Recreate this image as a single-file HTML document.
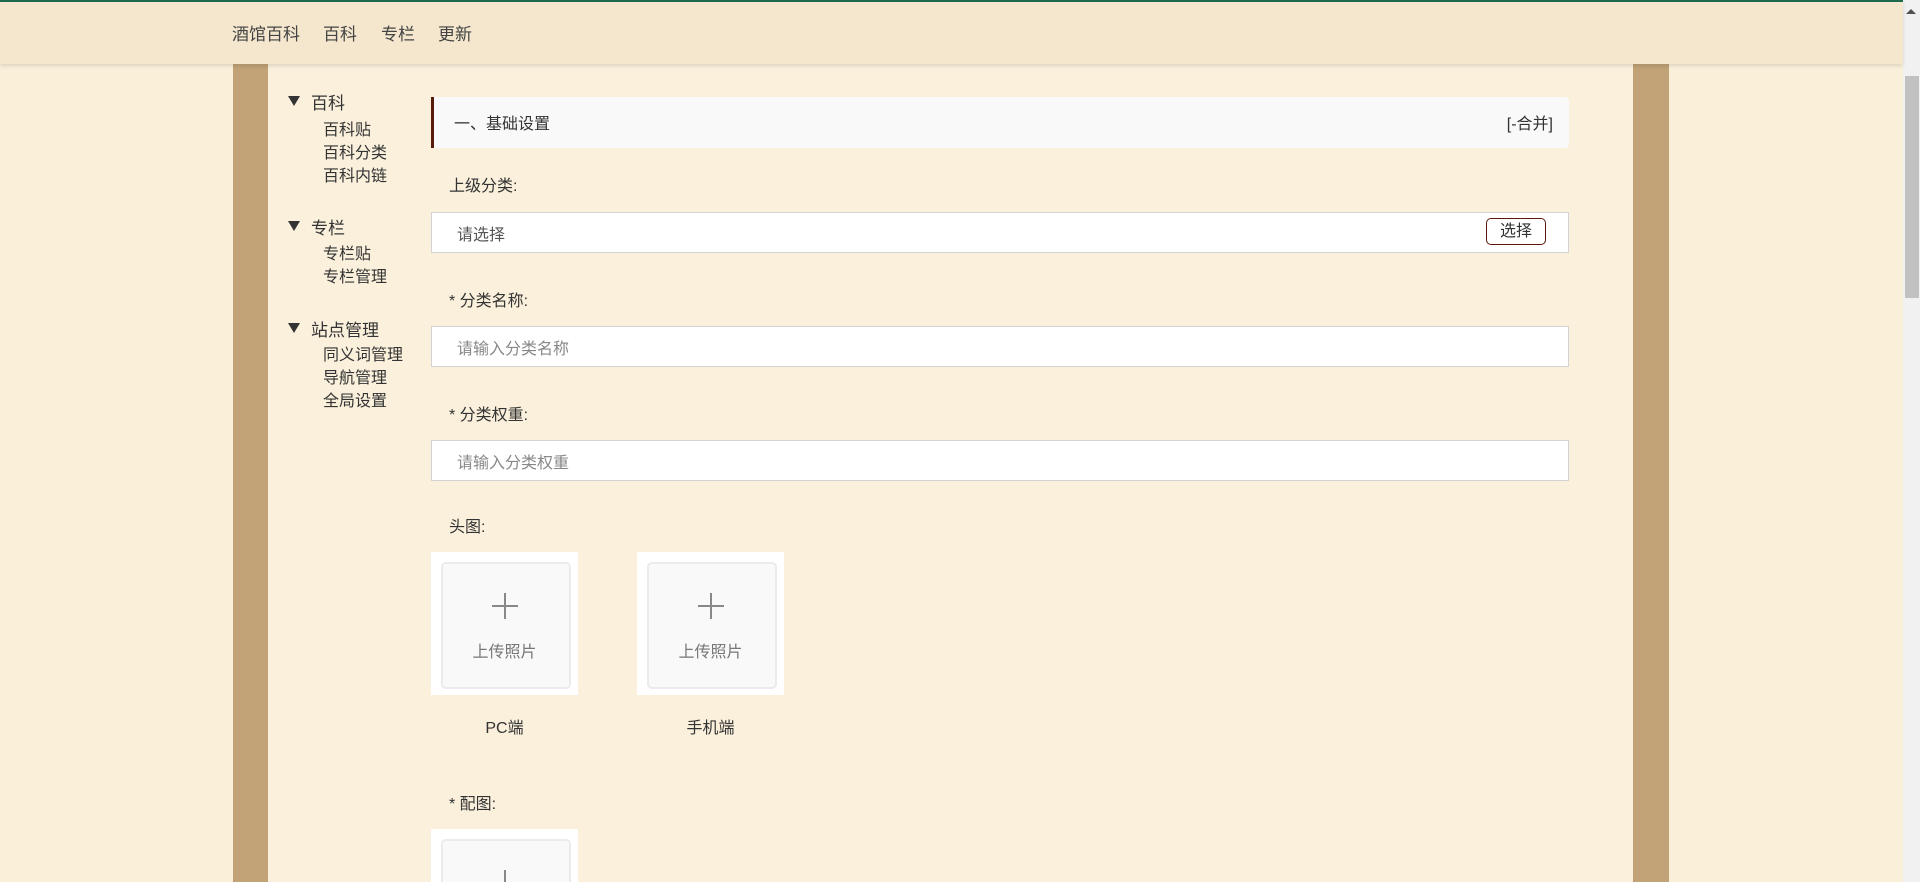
<!DOCTYPE html>
<html style="overflow:hidden;height:882px"><head><meta charset="utf-8"><style>
*{margin:0;padding:0;box-sizing:border-box}
body{width:1920px;height:882px;overflow:hidden;background:#faf0da;font-family:"Liberation Sans","Noto Sans CJK SC",sans-serif;color:#333;position:relative;font-size:16px}
.topline{position:absolute;left:0;top:0;width:1903px;height:2px;background:#1d6b4c;z-index:5}
.header{position:absolute;left:0;top:0;width:1903px;height:64px;background:#f4e7ce;box-shadow:0 2px 4px rgba(0,0,0,.12);z-index:3}
.header span{position:absolute;top:20px;font-size:17px;color:#444}
.bar{position:absolute;top:64px;height:818px;width:36px;background:#c2a377}
.main{position:absolute;left:268px;top:64px;width:1365px;height:818px;background:#faf0dc}
.abs{position:absolute;white-space:nowrap}
.tri{position:absolute;width:0;height:0;border-left:6px solid transparent;border-right:6px solid transparent;border-top:10px solid #333}
.sec{position:absolute;left:431px;top:97px;width:1138px;height:51px;background:#f9f9f9;border-left:3px solid #5a1a0a;border-radius:0 4px 4px 0}
.inp{position:absolute;left:431px;width:1138px;height:41px;background:#fff;border:1px solid #d3d3d3;color:#555}
.inp span{position:absolute;left:25px;top:8px}
.ph{color:#888}
.up{position:absolute;width:147px;height:143px;background:#fff;overflow:hidden}
.up .in{position:absolute;left:10px;top:10px;width:130px;height:127px;background:#f9f9f9;border:2px solid #ebebeb;border-radius:5px}
.up .pl1{position:absolute;left:61px;top:53px;width:26px;height:2px;background:#888}
.up .pl2{position:absolute;left:73px;top:41px;width:2px;height:26px;background:#888}
.up .t{position:absolute;left:0;width:100%;top:86px;text-align:center;color:#777;font-size:16px}
.sb{position:absolute;left:1903px;top:0;width:17px;height:882px;background:#f1f1f1}
.thumb{position:absolute;left:1905px;top:76px;width:14px;height:222px;background:#c1c1c1}
</style></head><body>
<div class="topline"></div>
<div class="header">
<span style="left:232px">酒馆百科</span><span style="left:323px">百科</span><span style="left:381px">专栏</span><span style="left:438px">更新</span>
</div>
<div class="bar" style="left:233px"></div>
<div class="main"></div>
<div class="bar" style="left:1633px"></div>

<div class="tri" style="left:288px;top:96px"></div><div class="abs" style="left:311px;top:89px;font-size:17px">百科</div>
<div class="abs" style="left:323px;top:116px">百科贴</div>
<div class="abs" style="left:323px;top:139px">百科分类</div>
<div class="abs" style="left:323px;top:162px">百科内链</div>
<div class="tri" style="left:288px;top:221px"></div><div class="abs" style="left:311px;top:214px;font-size:17px">专栏</div>
<div class="abs" style="left:323px;top:240px">专栏贴</div>
<div class="abs" style="left:323px;top:263px">专栏管理</div>
<div class="tri" style="left:288px;top:323px"></div><div class="abs" style="left:311px;top:316px;font-size:17px">站点管理</div>
<div class="abs" style="left:323px;top:341px">同义词管理</div>
<div class="abs" style="left:323px;top:364px">导航管理</div>
<div class="abs" style="left:323px;top:387px">全局设置</div>

<div class="sec"><span class="abs" style="left:20px;top:13px">一、基础设置</span><span class="abs" style="right:16px;top:13px">[-合并]</span></div>
<div class="abs" style="left:449px;top:172px">上级分类:</div>
<div class="inp" style="top:212px"><span>请选择</span><div class="abs" style="left:1054px;top:5px;width:60px;height:27px;border:1px solid #5a1a0a;border-radius:5px;text-align:center;line-height:25px;color:#333">选择</div></div>
<div class="abs" style="left:449px;top:287px">* 分类名称:</div>
<div class="inp" style="top:326px"><span class="ph">请输入分类名称</span></div>
<div class="abs" style="left:449px;top:401px">* 分类权重:</div>
<div class="inp" style="top:440px"><span class="ph">请输入分类权重</span></div>
<div class="abs" style="left:449px;top:513px">头图:</div>
<div class="up" style="left:431px;top:552px"><div class="in"></div><div class="pl1"></div><div class="pl2"></div><div class="t">上传照片</div></div>
<div class="up" style="left:637px;top:552px"><div class="in"></div><div class="pl1"></div><div class="pl2"></div><div class="t">上传照片</div></div>
<div class="abs" style="left:431px;width:147px;text-align:center;top:714px">PC端</div>
<div class="abs" style="left:637px;width:147px;text-align:center;top:714px">手机端</div>
<div class="abs" style="left:449px;top:790px">* 配图:</div>
<div class="up" style="left:431px;top:829px;height:53px"><div class="in"></div><div class="pl1"></div><div class="pl2"></div></div>

<div class="sb"></div><div class="thumb"></div>
<div class="abs" style="left:1906px;top:9px;width:0;height:0;border-left:5px solid transparent;border-right:5px solid transparent;border-bottom:5px solid #505050"></div>
</body></html>
